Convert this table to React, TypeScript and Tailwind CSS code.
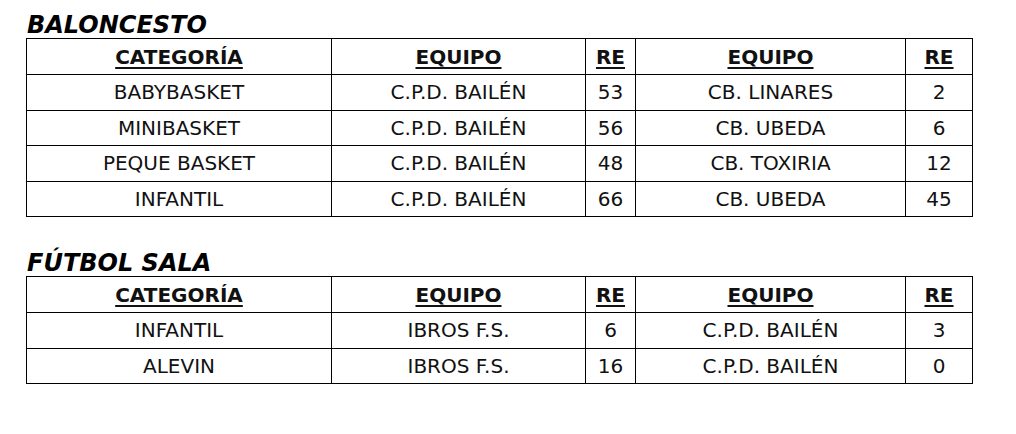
import React from 'react';

type Row = { cat: string; home: string; homeScore: number; away: string; awayScore: number };

const baloncesto: Row[] = [
  { cat: 'BABYBASKET', home: 'C.P.D. BAILÉN', homeScore: 53, away: 'CB. LINARES', awayScore: 2 },
  { cat: 'MINIBASKET', home: 'C.P.D. BAILÉN', homeScore: 56, away: 'CB. UBEDA', awayScore: 6 },
  { cat: 'PEQUE BASKET', home: 'C.P.D. BAILÉN', homeScore: 48, away: 'CB. TOXIRIA', awayScore: 12 },
  { cat: 'INFANTIL', home: 'C.P.D. BAILÉN', homeScore: 66, away: 'CB. UBEDA', awayScore: 45 },
];

const futbolSala: Row[] = [
  { cat: 'INFANTIL', home: 'IBROS F.S.', homeScore: 6, away: 'C.P.D. BAILÉN', awayScore: 3 },
  { cat: 'ALEVIN', home: 'IBROS F.S.', homeScore: 16, away: 'C.P.D. BAILÉN', awayScore: 0 },
];

function ResultsTable({ title, rows }: { title: string; rows: Row[] }) {
  return (
    <div>
      <h2 className="text-[24px] leading-[26px] font-bold italic text-black pl-[1px]">{title}</h2>
      <table className="border-collapse table-fixed w-[946px] text-[20px] text-[#111]">
        <colgroup>
          <col className="w-[305px]" />
          <col className="w-[254px]" />
          <col className="w-[50px]" />
          <col className="w-[270px]" />
          <col className="w-[67px]" />
        </colgroup>
        <thead>
          <tr className="h-[36px]">
            {['CATEGORÍA', 'EQUIPO', 'RE', 'EQUIPO', 'RE'].map((h, i) => (
              <th key={i} className="border border-black font-bold underline underline-offset-[3px] text-center p-0">
                {h}
              </th>
            ))}
          </tr>
        </thead>
        <tbody>
          {rows.map((r) => (
            <tr key={r.cat} className="h-[35.5px]">
              <td className="border border-black text-center p-0">{r.cat}</td>
              <td className="border border-black text-center p-0">{r.home}</td>
              <td className="border border-black text-center p-0">{r.homeScore}</td>
              <td className="border border-black text-center p-0">{r.away}</td>
              <td className="border border-black text-center p-0">{r.awayScore}</td>
            </tr>
          ))}
        </tbody>
      </table>
    </div>
  );
}

export default function App() {
  return (
    <div className="w-[1016px] h-[434px] bg-white pl-[26px] pt-[12px] font-['DejaVu_Sans',Verdana,sans-serif]">
      <div className="flex flex-col gap-[33px]">
        <ResultsTable title="BALONCESTO" rows={baloncesto} />
        <ResultsTable title="FÚTBOL SALA" rows={futbolSala} />
      </div>
    </div>
  );
}
